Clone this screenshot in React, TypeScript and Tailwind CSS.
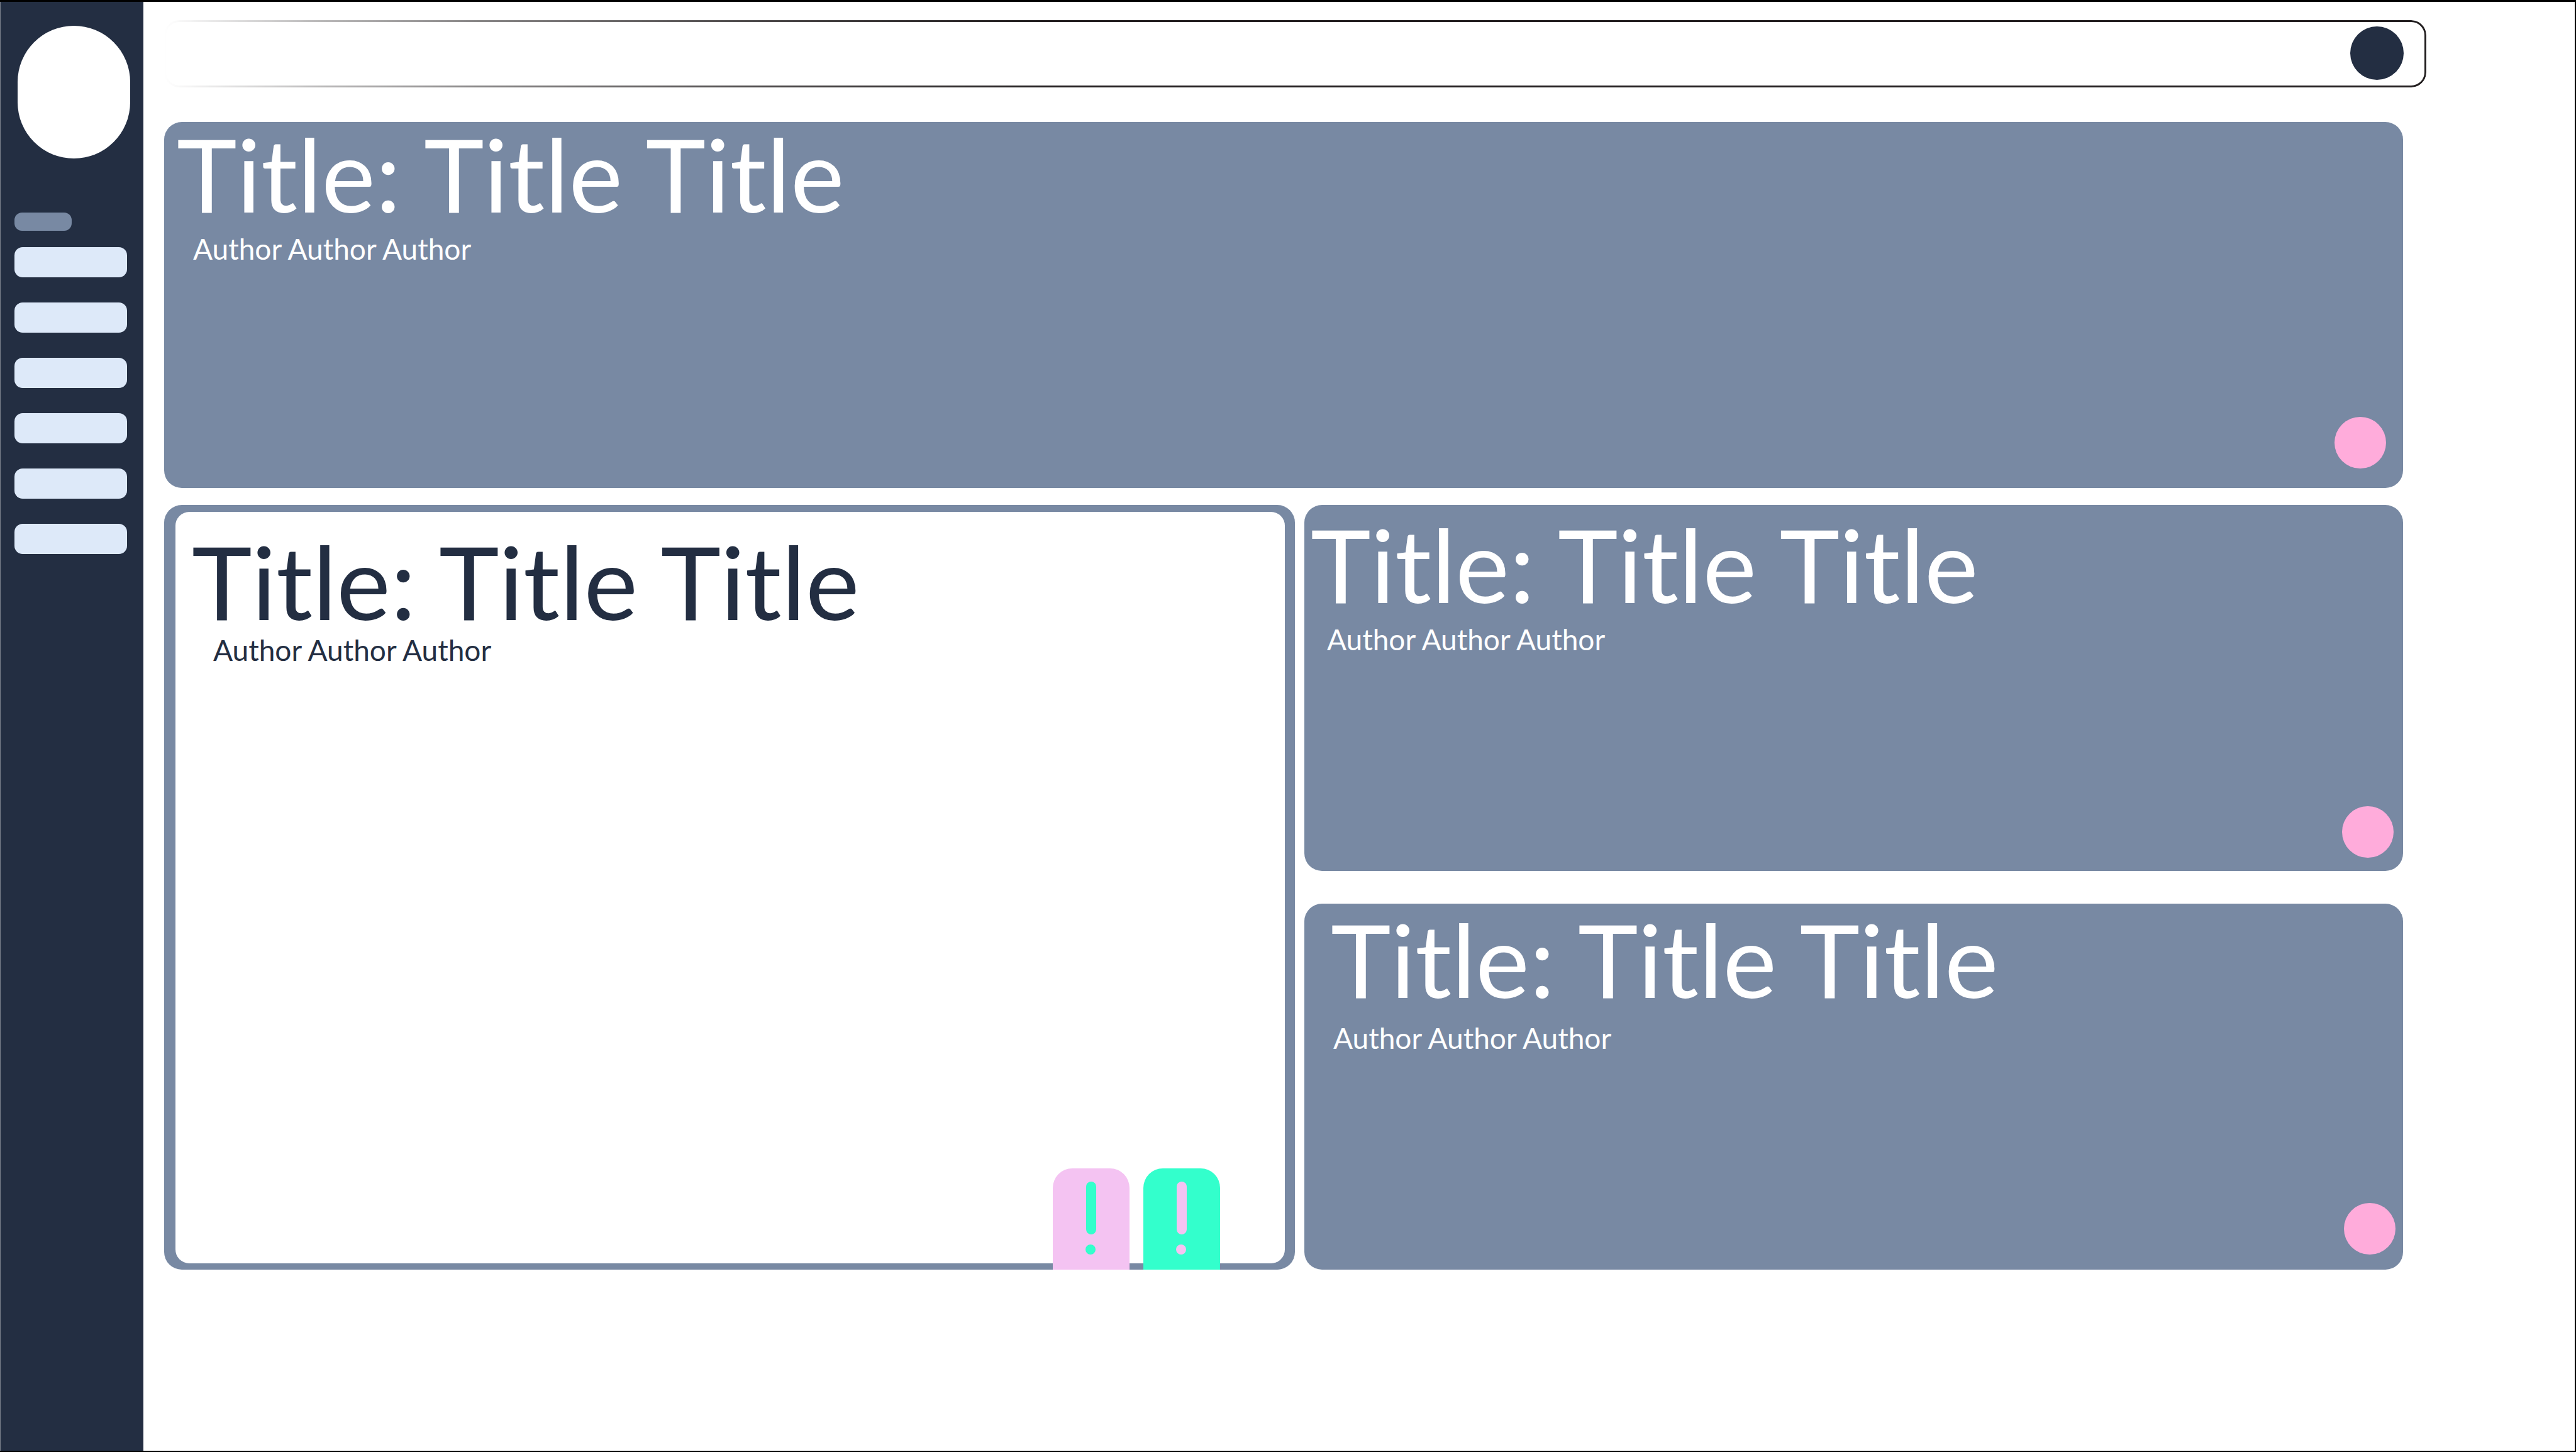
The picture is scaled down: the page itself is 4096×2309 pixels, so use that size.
import React from "react";

const NAV_ITEMS = ["Home", "Browse", "Library", "Authors", "Saved", "Settings"];

type EntryProps = {
  titleClass: string;
  authorClass: string;
};

function Entry({ titleClass, authorClass }: EntryProps) {
  return (
    <>
      <h2 className={`whitespace-nowrap text-[162px] leading-[156px] ${titleClass}`}>Title: Title Title</h2>
      <p className={`whitespace-nowrap text-[46px] leading-[56px] ${authorClass}`}>Author Author Author</p>
    </>
  );
}

function CardAction({ className }: { className: string }) {
  return (
    <button
      type="button"
      aria-label="Open entry"
      className={`absolute size-[82px] rounded-full bg-[#ffacdb] ${className}`}
    />
  );
}

function AlertTab({ label, tabClass, markClass }: { label: string; tabClass: string; markClass: string }) {
  return (
    <button
      type="button"
      aria-label={label}
      className={`h-[161px] w-[122px] rounded-t-[31px] ${tabClass}`}
    >
      <svg viewBox="0 0 122 161" className={`h-full w-full ${markClass}`} aria-hidden="true">
        <rect x="53" y="21" width="16" height="84" rx="8" fill="currentColor" />
        <circle cx="60" cy="129" r="8" fill="currentColor" />
      </svg>
    </button>
  );
}

export default function App() {
  return (
    <div className="flex min-h-screen border-r-2 border-b-2 border-t-[3px] border-black bg-white font-['Lato',sans-serif] text-white">
      <aside className="flex w-[228px] shrink-0 flex-col border-l border-[#7c828d] bg-[#232e42] pl-[22px] pt-[38px]">
        <button type="button" aria-label="Profile" className="ml-[5px] h-[211px] w-[179px] rounded-full bg-white" />
        <div className="mt-[86px] h-[29px] w-[91px] rounded-xl bg-[#7889a3]" />
        <nav className="mt-[26px] flex flex-col gap-10">
          {NAV_ITEMS.map((item) => (
            <a
              key={item}
              href="#"
              aria-label={item}
              className="h-12 w-[179px] rounded-[13px] bg-[#dde9f9]"
            />
          ))}
        </nav>
      </aside>

      <main className="min-w-0 flex-1 pl-[33px] pt-[29px]">
        <form role="search" className="relative mr-[236px] h-[107px] pl-1">
          <div className="absolute inset-0 rounded-3xl border-[3px] border-[#231f20] [mask-image:linear-gradient(to_right,transparent,rgba(0,0,0,0.31)_243px,rgba(0,0,0,0.54)_500px,rgba(0,0,0,0.82)_967px,black_1400px)]" />
          <input
            type="search"
            aria-label="Search"
            className="relative h-full w-full bg-transparent pl-8 pr-40 text-[46px] text-[#232e42] outline-none"
          />
          <button
            type="submit"
            aria-label="Submit search"
            className="absolute right-9 top-[10px] size-[85px] rounded-full bg-[#232e42]"
          />
        </form>

        <div className="mr-[273px] mt-[55px] flex flex-col gap-[27px]">
          <article className="relative min-h-[582px] rounded-[28px] bg-[#7889a3]">
            <Entry titleClass="pl-5 pt-1" authorClass="pl-[46px] pt-[14px]" />
            <CardAction className="bottom-[31px] right-[27px]" />
          </article>

          <div className="grid grid-cols-[1798fr_1747fr] gap-x-[15px]">
            <article className="relative rounded-[28px] bg-[#7889a3] pb-[10px] pl-[18px] pr-4 pt-[11px] text-[#232e42]">
              <div className="h-full rounded-[22px] bg-white">
                <Entry titleClass="pl-[26px] pt-8" authorClass="pl-[60px] pt-1" />
              </div>
              <div className="absolute bottom-0 right-[119px] flex gap-[22px]">
                <AlertTab label="Pink alert" tabClass="bg-[#f4c3f2]" markClass="text-[#33ffcc]" />
                <AlertTab label="Green alert" tabClass="bg-[#33ffcc]" markClass="text-[#f4c3f2]" />
              </div>
            </article>

            <div className="flex flex-col gap-[52px]">
              <article className="relative min-h-[582px] rounded-[28px] bg-[#7889a3]">
                <Entry titleClass="pl-[10px] pt-4" authorClass="pl-9 pt-[14px]" />
                <CardAction className="bottom-[21px] right-[15px]" />
              </article>
              <article className="relative min-h-[582px] rounded-[28px] bg-[#7889a3]">
                <Entry titleClass="pl-[42px] pt-[10px]" authorClass="pl-[46px] pt-5" />
                <CardAction className="bottom-6 right-3" />
              </article>
            </div>
          </div>
        </div>
      </main>
    </div>
  );
}
